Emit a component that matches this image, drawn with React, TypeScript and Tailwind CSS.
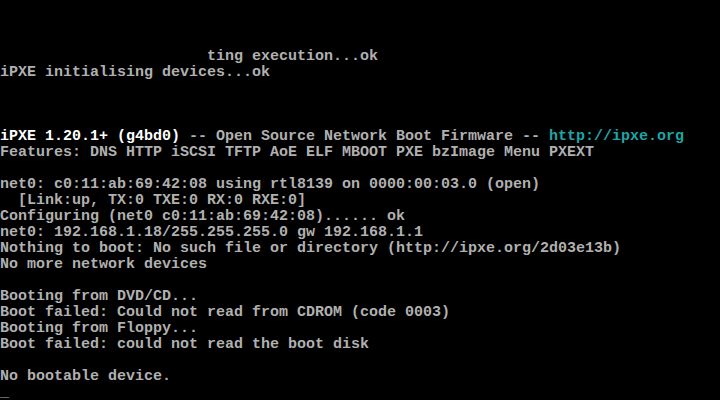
type Seg = { t: string; c?: 'white' | 'cyan' }

// one entry per 16px text row, 25 rows like a VGA console
const rows: Seg[][] = [
  [],
  [],
  [],
  [{ t: '                       ting execution...ok' }],
  [{ t: 'iPXE initialising devices...ok' }],
  [],
  [],
  [],
  [
    { t: 'iPXE 1.20.1+ (g4bd0)', c: 'white' },
    { t: ' -- Open Source Network Boot Firmware -- ' },
    { t: 'http://ipxe.org', c: 'cyan' },
  ],
  [{ t: 'Features: DNS HTTP iSCSI TFTP AoE ELF MBOOT PXE bzImage Menu PXEXT' }],
  [],
  [{ t: 'net0: c0:11:ab:69:42:08 using rtl8139 on 0000:00:03.0 (open)' }],
  [{ t: '  [Link:up, TX:0 TXE:0 RX:0 RXE:0]' }],
  [{ t: 'Configuring (net0 c0:11:ab:69:42:08)...... ok' }],
  [{ t: 'net0: 192.168.1.18/255.255.255.0 gw 192.168.1.1' }],
  [{ t: 'Nothing to boot: No such file or directory (http://ipxe.org/2d03e13b)' }],
  [{ t: 'No more network devices' }],
  [],
  [{ t: 'Booting from DVD/CD...' }],
  [{ t: 'Boot failed: Could not read from CDROM (code 0003)' }],
  [{ t: 'Booting from Floppy...' }],
  [{ t: 'Boot failed: could not read the boot disk' }],
  [],
  [{ t: 'No bootable device.' }],
  [{ t: '_' }],
]

const colorClass = (c?: Seg['c']) => {
  if (c === 'white') return 'text-white'
  if (c === 'cyan') return 'text-[#1fa5a5]'
  return 'text-[#b0b0b0]'
}

export default function App() {
  return (
    <div className="h-[400px] w-[720px] overflow-hidden bg-black pt-[1px] font-['Liberation_Mono',monospace] text-[15px] leading-[16px] font-bold">
      {rows.map((row, i) => (
        <div key={i} className="h-[16px] whitespace-pre">
          {row.map((s, j) => (
            <span key={j} className={colorClass(s.c)}>
              {s.t}
            </span>
          ))}
        </div>
      ))}
    </div>
  )
}
